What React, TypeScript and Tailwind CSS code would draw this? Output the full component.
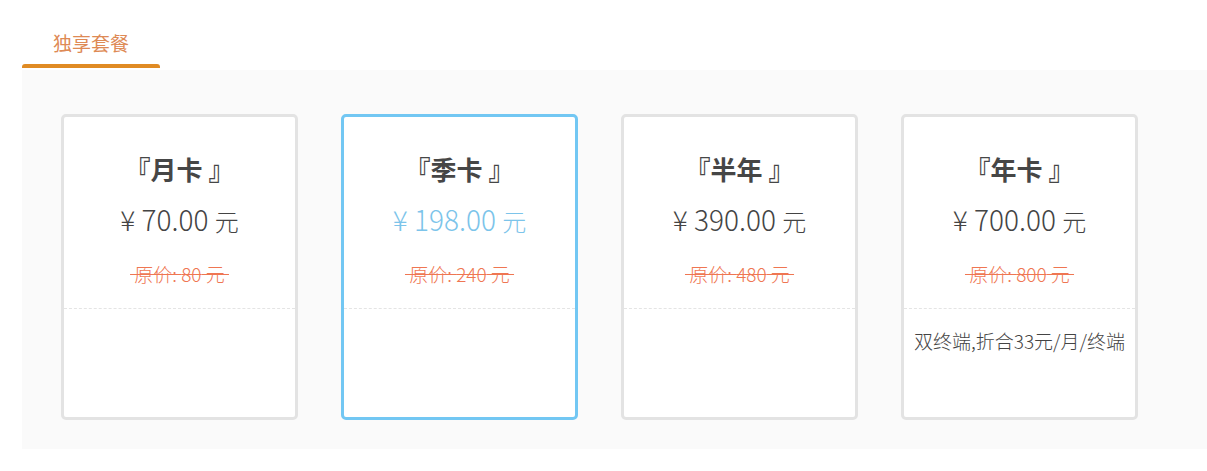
const plans = [
  { name: '『月卡 』', price: '70.00', original: '80', note: '', active: false },
  { name: '『季卡 』', price: '198.00', original: '240', note: '', active: true },
  { name: '『半年 』', price: '390.00', original: '480', note: '', active: false },
  { name: '『年卡 』', price: '700.00', original: '800', note: '双终端,折合33元/月/终端', active: false },
];

const App = () => {
  return (
    <div className="min-h-[471px] bg-white font-['Noto_Sans_CJK_SC',sans-serif]">
      {/* Tab */}
      <div className="pt-[26px] pl-[22px]">
        <div className="w-[138px] flex flex-col items-center">
          <span className="text-[19px] leading-[34px] text-[#de8a55]">独享套餐</span>
          <div className="mt-[4px] h-[4px] w-full bg-[#e08b24] rounded-t-[3px]" />
        </div>
      </div>

      {/* Panel */}
      <div className="ml-[22px] mt-[2px] bg-[#fafafa] pt-[44px] pb-[29px] pl-[39px] flex gap-[43px]">
        {plans.map((plan) => (
          <div
            key={plan.name}
            className={`w-[237px] h-[306px] bg-white rounded-[5px] border-[3px] flex flex-col ${
              plan.active ? 'border-[#72c7f3]' : 'border-[#e3e3e3]'
            }`}
          >
            <div className="h-[192px] flex flex-col items-center pt-[32px] border-b border-dashed border-[#e4e4e4]">
              <div className="text-[26px] leading-[40px] font-bold text-[#464646]">
                {plan.name}
              </div>
              <div
                className={`mt-[10px] text-[28px] leading-[40px] font-light ${
                  plan.active ? 'text-[#7cc4ea]' : 'text-[#444]'
                }`}
              >
                ¥ {plan.price} <span className="text-[24px]">元</span>
              </div>
              <div className="mt-[18px] text-[19px] leading-[30px] text-[#ef7652] line-through font-light">
                &nbsp;原价: {plan.original} 元&nbsp;
              </div>
            </div>
            {plan.note && (
              <div className="mt-[19px] text-center text-[19px] leading-[26px] text-[#444] font-light">
                {plan.note}
              </div>
            )}
          </div>
        ))}
      </div>
    </div>
  );
};

export default App;
